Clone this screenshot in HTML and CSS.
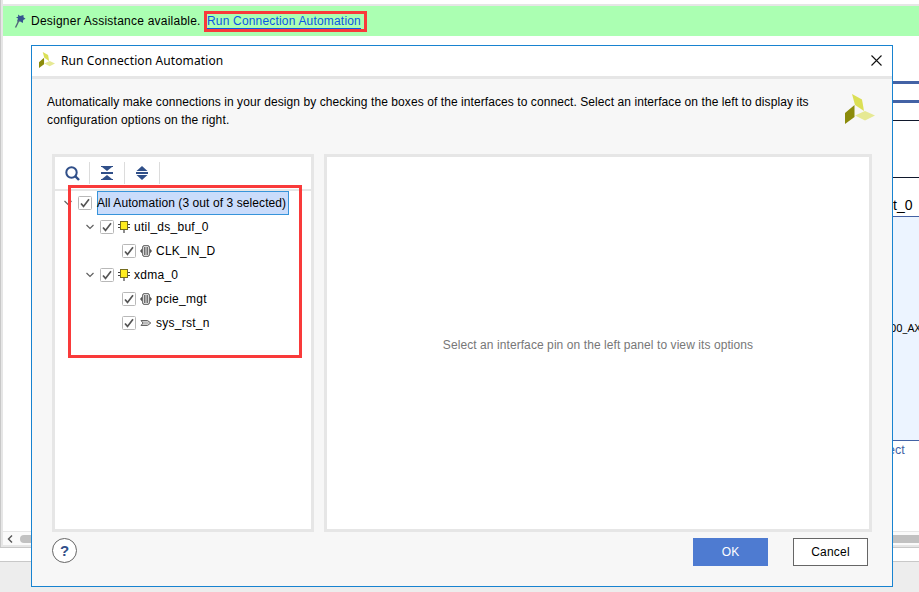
FILE: index.html
```html
<!DOCTYPE html>
<html lang="en">
<head>
<meta charset="utf-8">
<title>Run Connection Automation</title>
<link rel="stylesheet" href="styles.css">
</head>
<body>
<svg class="defs" width="0" height="0">
  <symbol id="check" viewBox="0 0 14 14"><rect x=".5" y=".5" width="13" height="13" rx="1" fill="#fff" stroke="#b8b8b8"/><path d="M3 7.5 5.5 10.4 11 3.3" fill="none" stroke="#555" stroke-width="1.7"/></symbol>
  <symbol id="arrow" viewBox="0 0 8 6"><path d="M.5 1 4 4.5 7.5 1" fill="none" stroke="#606060" stroke-width="1.2"/></symbol>
  <symbol id="block" viewBox="0 0 12 12"><path d="M0 3.5H12M0 6.5H12M6 9V12" stroke="#444" stroke-width="1.2"/><rect x="2.5" y=".5" width="7" height="8" fill="#ffec1f" stroke="#756d20"/></symbol>
  <symbol id="bus" viewBox="0 0 12 12"><path d="M0 6 2.5 3V9ZM12 6 9.5 3V9Z" fill="#555"/><path d="M2.5 1.5H3.5V.5H8.5V1.5H9.5V10.5H8.5V11.5H3.5V10.5H2.5Z" fill="#d8d8d8" stroke="#666" stroke-width=".9"/><path d="M4.8 2V10M7.2 2V10" stroke="#444"/></symbol>
  <symbol id="port" viewBox="0 0 12 8"><path d="M1 1.5H7.5L10.8 4 7.5 6.5H1L3 4Z" fill="#ccc" stroke="#666"/><path d="M3 4H8" stroke="#aaa"/></symbol>
  <symbol id="logo" viewBox="0 0 30 30"><path d="M7 0 17 5.5 19 17 10 11Z" fill="#dbdf55"/><path d="M0 19 9.5 11V23L0 30Z" fill="#8b8b0b"/><path d="M10 21.5 20 17 30 21.5 20 26.5Z" fill="#e6e994"/></symbol>
</svg>
<div class="app">
  <main class="workspace">
    <div class="assist">
      <svg class="pin" viewBox="0 0 12 14"><path d="M4 .5 6 2 9.5 1 9.5 3.2 11.5 4.8 9.2 6 8.8 9 6.2 7.4 3 7.5 4 4.6 2 3.2 4.2 2.8Z" fill="#35548f"/><path d="M5.2 6 1.5 13.5" stroke="#526578" stroke-width="1.4"/></svg>
      <span class="assist-text">Designer Assistance available.</span>
      <a class="assist-link"><span>Run Connection Automation</span></a>
    </div>
    <div class="canvas"></div>
    <div class="scroll"><svg width="6" height="8" viewBox="0 0 6 8"><path d="M5 .5 1.5 4 5 7.5" fill="none" stroke="#555" stroke-width="1.4"/></svg><i></i></div>
  </main>
  <footer></footer>
</div>
<svg class="diagram" width="27" height="490" viewBox="892 45 27 490">
  <path d="M892 82.5H919M892 101.5H919" stroke="#4362a5" stroke-width="3"/>
  <path d="M892 120.5H919M892 177.5H919" stroke="#10182c"/>
  <rect x="892" y="217" width="27" height="223" fill="#ecf4ff"/>
  <path d="M892 216.5H919M892 440.5H919" stroke="#4362a5"/>
  <text x="893" y="210" font-size="14">t_0</text>
  <text class="port-name" x="890" y="332" font-size="11">00_AX</text>
  <text x="888" y="454" font-size="12.5" fill="#4362a5">ect</text>
</svg>
<section class="dialog">
  <header class="titlebar">
    <svg class="mini-logo"><use href="#logo"/></svg><span>Run Connection Automation</span>
    <svg class="close" viewBox="0 0 11 11"><path d="M.5.5 10.5 10.5M10.5.5.5 10.5" stroke="#111" stroke-width="1.1"/></svg>
  </header>
  <div class="intro">
    <p><span class="line1">Automatically make connections in your design by checking the boxes of the interfaces to connect. Select an interface on the left to display its</span><br><span class="line2">configuration options on the right.</span></p>
    <svg class="logo"><use href="#logo"/></svg>
  </div>
  <div class="panels">
    <div class="panel left">
      <div class="toolbar">
        <span><svg width="15" height="15" viewBox="0 0 15 15"><circle cx="6.5" cy="6.5" r="5.2" fill="none" stroke="#304f89" stroke-width="2"/><path d="m10.2 10.2 3.8 3.8" stroke="#304f89" stroke-width="2.4"/></svg></span>
        <span><svg width="12" height="14" viewBox="0 0 12 14"><path d="M0 0H12V1H11L6 5 1 1H0ZM0 14H12V13H11L6 9 1 13H0ZM0 6H12V8H0Z" fill="#304f89"/></svg></span>
        <span><svg width="12" height="14" viewBox="0 0 12 14"><path d="M6 0 11.5 5H.5ZM6 14 11.5 9H.5ZM0 6H12V8H0Z" fill="#304f89"/></svg></span>
      </div>
      <div class="tree">
        <div class="row"><svg class="arrow"><use href="#arrow"/></svg><svg class="check"><use href="#check"/></svg><span class="selected"><span class="root-label">All Automation (3 out of 3 selected)</span></span></div>
        <div class="row branch"><svg class="arrow"><use href="#arrow"/></svg><svg class="check"><use href="#check"/></svg><svg class="icon"><use href="#block"/></svg><span>util_ds_buf_0</span></div>
        <div class="row leaf"><svg class="check"><use href="#check"/></svg><svg class="icon"><use href="#bus"/></svg><span>CLK_IN_D</span></div>
        <div class="row branch"><svg class="arrow"><use href="#arrow"/></svg><svg class="check"><use href="#check"/></svg><svg class="icon"><use href="#block"/></svg><span>xdma_0</span></div>
        <div class="row leaf"><svg class="check"><use href="#check"/></svg><svg class="icon"><use href="#bus"/></svg><span>pcie_mgt</span></div>
        <div class="row leaf"><svg class="check"><use href="#check"/></svg><svg class="icon port"><use href="#port"/></svg><span>sys_rst_n</span></div>
      </div>
    </div>
    <div class="panel right"><span>Select an interface pin on the left panel to view its options</span></div>
  </div>
  <div class="actions"><button class="help">?</button><button class="ok">OK</button><button class="cancel">Cancel</button></div>
</section>
<div class="highlight tree-highlight"></div>
<div class="highlight link-highlight"></div>
</body>
</html>
```

FILE: styles.css
```css
* { box-sizing: border-box; }
body { margin: 0; width: 919px; height: 592px; overflow: hidden; position: relative; font: 12px "Liberation Sans", sans-serif; color: #000; background: #ededed; }
svg { display: block; flex: none; }
.defs { position: absolute; }
.app { height: 592px; display: flex; flex-direction: column; }
.workspace { height: 548px; border-left: 1px solid #c8c8c8; border-bottom: 1px solid #c8c8c8; box-shadow: inset 2px 0 #e6e6e6, inset 0 -2px #e6e6e6; background: #fff; padding: 4px 0 2px 2px; display: flex; flex-direction: column; }
.assist { height: 32px; flex: none; border-top: 2px solid #e6e6e6; background: #abffb2; display: flex; align-items: center; padding-left: 11px; }
.pin { width: 12px; height: 14px; margin-right: 5px; }
.assist-text { width: 176px; white-space: nowrap; letter-spacing: .23px; }
.assist-link { color: #0b57e5; white-space: nowrap; letter-spacing: .18px; border-bottom: 1px solid #0b57e5; line-height: 14px; }
.canvas { flex: 1; }
.scroll { height: 14px; border-top: 1px solid #e6e6e6; background: #fafafa; display: flex; align-items: center; padding-left: 4px; gap: 7px; }
.scroll i { flex: 1; height: 8px; border-radius: 4px 0 0 4px; background: #c1c1c1; }
footer { height: 14px; background: #fff; border-bottom: 1px solid #c8c8c8; }
.diagram { position: absolute; left: 892px; top: 45px; font-family: "Liberation Sans", sans-serif; }
.port-name { font-family: "Noto Sans", sans-serif; }
.dialog { position: absolute; left: 31px; top: 45px; width: 862px; height: 542px; border: 1px solid #1883d0; background: #f7f7f7; display: flex; flex-direction: column; }
.titlebar { height: 33px; background: #fff; border-bottom: 3px solid #e6e6e6; display: flex; align-items: center; padding: 0 10px 2px 7px; font: 12px "Noto Sans", sans-serif; letter-spacing: .11px; }
.mini-logo { width: 16px; height: 16px; margin-right: 6px; }
.close { width: 11px; height: 11px; margin-left: auto; }
.intro { height: 75px; display: flex; justify-content: space-between; padding: 14px 17px 0 15px; }
.intro p { margin: 0; line-height: 18px; white-space: nowrap; }
.line1 { letter-spacing: .078px; }
.line2 { letter-spacing: .14px; }
.logo { width: 30px; height: 30px; margin-top: 1px; }
.panels { display: flex; gap: 10px; height: 378px; margin-left: 20px; }
.panel { background: #fff; border: 3px solid #e6e6e6; }
.left { width: 262px; }
.right { width: 548px; display: flex; align-items: center; justify-content: center; padding-top: 3px; color: #777; letter-spacing: .08px; }
.toolbar { height: 34px; border-bottom: 2px solid #e6e6e6; display: flex; align-items: center; }
.toolbar span { width: 35px; height: 22px; border-right: 1px solid #dcdcdc; display: flex; align-items: center; justify-content: center; }
.row { height: 24px; display: flex; align-items: center; padding-left: 9px; white-space: nowrap; letter-spacing: .26px; }
.branch { padding-left: 31px; }
.leaf { padding-left: 67px; }
.arrow { width: 8px; height: 6px; margin-right: 6px; }
.check { width: 14px; height: 14px; margin-right: 4px; }
.icon { width: 12px; height: 12px; margin-right: 4px; }
.port { height: 8px; }
.selected { width: 192px; height: 24px; margin-left: 1px; line-height: 22px; background: #cadcfb; border: 1px solid #3794da; letter-spacing: .085px; text-indent: -1px; }
.actions { display: flex; align-items: center; height: 28px; margin: 6px 24px 0 20px; }
button { font: inherit; padding: 0; border-radius: 0; }
.help { width: 25px; height: 25px; border: 1px solid #666; border-radius: 50%; background: #fff; color: #304f89; font-weight: bold; font-size: 15px; margin-right: auto; margin-top: -3px; }
.ok, .cancel { width: 75px; height: 28px; }
.ok { background: #4e7bd1; border: 0; color: #fff; margin-right: 25px; }
.cancel { background: #fff; border: 1px solid #666; letter-spacing: .2px; }
.highlight { position: absolute; border: 3px solid #f93a3a; }
.tree-highlight { left: 68px; top: 185px; width: 234px; height: 173px; }
.link-highlight { left: 204px; top: 11px; width: 163px; height: 21px; }
```
